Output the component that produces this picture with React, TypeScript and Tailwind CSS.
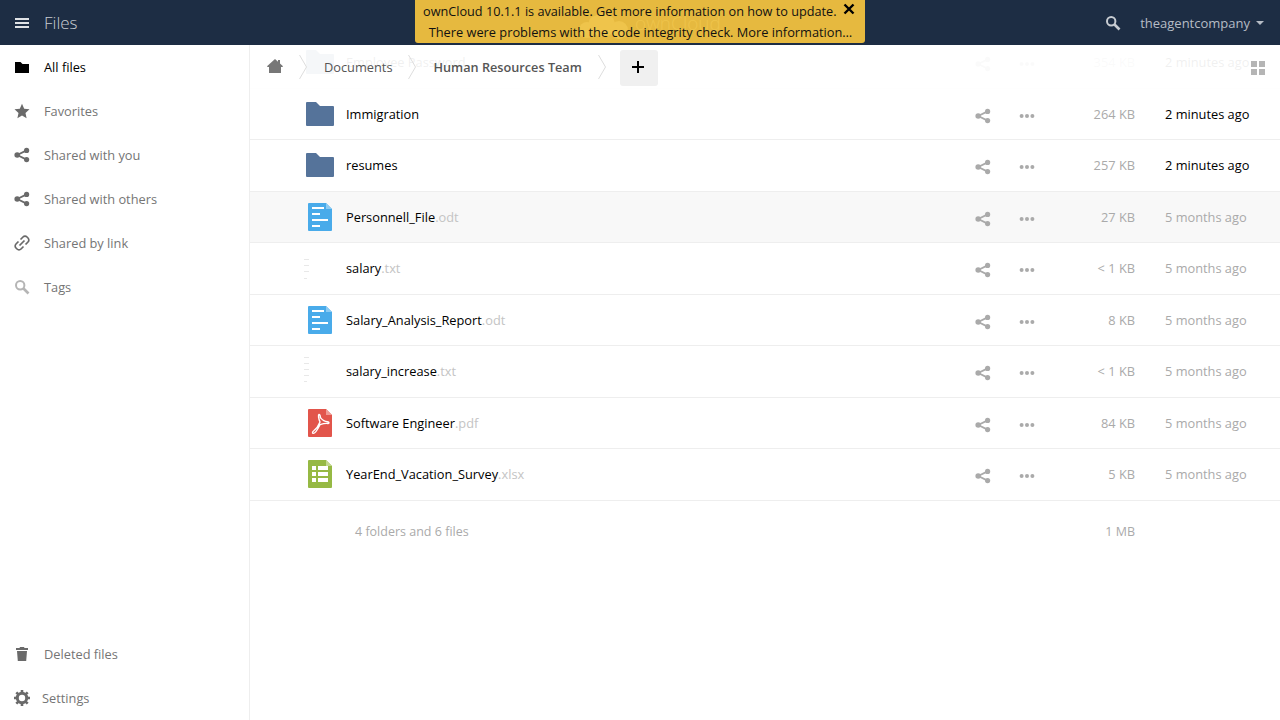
import React from "react";

const Share = ({ c = "#aaa", s = 16 }: { c?: string; s?: number }) => (
  <svg width={s} height={s} viewBox="0 0 16 16" fill={c} className="shrink-0">
    <circle cx="12.6" cy="3.4" r="2.6" />
    <circle cx="12.6" cy="12.6" r="2.6" />
    <circle cx="3.2" cy="8" r="2.8" />
    <path d="M3.2 8 12.6 3.4M3.2 8l9.4 4.6" stroke={c} strokeWidth="1.8" fill="none" />
  </svg>
);

const Dots = () => (
  <svg width="16" height="16" viewBox="0 0 16 16" fill="#aaa" className="shrink-0">
    <circle cx="2.6" cy="8" r="2" />
    <circle cx="8" cy="8" r="2" />
    <circle cx="13.4" cy="8" r="2" />
  </svg>
);

const Folder = ({ c = "#55739a" }: { c?: string }) => (
  <svg width="28" height="24" viewBox="0 0 28 24" className="shrink-0">
    <path d="M0 1a1 1 0 0 1 1-1h9l4 4h13a1 1 0 0 1 1 1v18a1 1 0 0 1-1 1H1a1 1 0 0 1-1-1z" fill={c} />
  </svg>
);

const Doc = () => (
  <svg width="24" height="28" viewBox="0 0 24 28" className="shrink-0">
    <path d="M1 0h17l6 6v21a1 1 0 0 1-1 1H1a1 1 0 0 1-1-1V1a1 1 0 0 1 1-1z" fill="#49abea" />
    <path d="M18 0l6 6h-6z" fill="#8ccbf3" />
    <path d="M4 4h12v2H4zM4 10h8v2H4zM4 16h16v2H4zM4 22h8v2H4z" fill="#fff" />
  </svg>
);

const Pdf = () => (
  <svg width="24" height="28" viewBox="0 0 24 28" className="shrink-0">
    <path d="M1 0h17l6 6v21a1 1 0 0 1-1 1H1a1 1 0 0 1-1-1V1a1 1 0 0 1 1-1z" fill="#e2554b" />
    <path d="M18 0l6 6h-6z" fill="#ee9b94" />
    <path
      d="M11 5.500c-1 .4-.5 4 1 7.500-1.500 3.700-4 7-6 8.500-1.400 1-2 2.400-1 2.800 1.600.5 4.500-3.600 7-8.600 3-1 6-1.500 8-1.200 1.300.2 1.400-1.800-.5-1.800-2.500 0-5.500-2-7-4C12.500 10 12.300 5 11 5.500z"
      fill="none"
      stroke="#fff"
      strokeWidth="1.400"
    />
  </svg>
);

const Sheet = () => (
  <svg width="24" height="28" viewBox="0 0 24 28" className="shrink-0">
    <path d="M1 0h17l6 6v21a1 1 0 0 1-1 1H1a1 1 0 0 1-1-1V1a1 1 0 0 1 1-1z" fill="#96b944" />
    <path d="M18 0l6 6h-6z" fill="#c3d78f" />
    <path d="M4 6h4v4H4zM10 6h10v4H10zM4 12h4v4H4zM10 12h10v4H10zM4 18h4v4H4zM10 18h10v4H10z" fill="#fff" />
  </svg>
);

const Faint = ({ long }: { long?: boolean }) => (
  <svg width="28" height="28" viewBox="0 0 28 28" className="shrink-0 overflow-visible">
    <path
      d={long ? "M-2 0.500h5M-2 6.500h5M-2 12.500h5M-2 18.500h5M-2 24.500h3" : "M-2 5.500h5M-2 11.500h5M-2 17.500h5M-2 24.500h3"}
      stroke="#e8e8e8"
      strokeWidth="1"
    />
  </svg>
);

type Row = {
  name: string;
  ext?: string;
  icon: React.ReactNode;
  size: string;
  date: string;
  recent?: boolean;
  selected?: boolean;
};

const rows: Row[] = [
  { name: "Employee Password", icon: <Folder />, size: "354 KB", date: "2 minutes ago", recent: true },
  { name: "Immigration", icon: <Folder />, size: "264 KB", date: "2 minutes ago", recent: true },
  { name: "resumes", icon: <Folder />, size: "257 KB", date: "2 minutes ago", recent: true },
  { name: "Personnell_File", ext: ".odt", icon: <Doc />, size: "27 KB", date: "5 months ago", selected: true },
  { name: "salary", ext: ".txt", icon: <Faint />, size: "< 1 KB", date: "5 months ago" },
  { name: "Salary_Analysis_Report", ext: ".odt", icon: <Doc />, size: "8 KB", date: "5 months ago" },
  { name: "salary_increase", ext: ".txt", icon: <Faint long />, size: "< 1 KB", date: "5 months ago" },
  { name: "Software Engineer", ext: ".pdf", icon: <Pdf />, size: "84 KB", date: "5 months ago" },
  { name: "YearEnd_Vacation_Survey", ext: ".xlsx", icon: <Sheet />, size: "5 KB", date: "5 months ago" },
];

const FileRow = ({ r }: { r: Row }) => (
  <div className={`flex h-[51.5px] items-center border-b border-[#eeeeee] pl-[56px] ${r.selected ? "bg-[#f8f8f8]" : ""}`}>
    <div className="flex w-[28px] justify-center">{r.icon}</div>
    <div className="ml-[12px] mt-[1.5px] flex-1 text-[12.8px] text-black">
      {r.name}
      {r.ext && <span className="text-[#c4c4c4]">{r.ext}</span>}
    </div>
    <div className="mt-[4px] flex w-[16px] justify-center">
      <Share />
    </div>
    <div className="ml-[28px] mt-[4px] flex w-[16px] justify-center">
      <Dots />
    </div>
    <div className="mt-[1px] w-[100px] text-right text-[12.8px] text-[#aaaaaa]">{r.size}</div>
    <div className={`ml-[30px] mt-[1px] w-[115px] text-[12.8px] ${r.recent ? "text-black" : "text-[#aaaaaa]"}`}>{r.date}</div>
  </div>
);

const NavIcon = ({ d, c = "#6a6a6a" }: { d: string; c?: string }) => (
  <svg width="16" height="16" viewBox="0 0 16 16" fill={c} className="shrink-0">
    <path d={d} />
  </svg>
);

const Search = ({ c, sw = 2 }: { c: string; sw?: number }) => (
  <svg width="16" height="16" viewBox="0 0 16 16" fill="none" stroke={c} className="shrink-0">
    <circle cx="6.200" cy="6.200" r="4.200" strokeWidth={sw} />
    <path d="M9.500 9.500l5 5" strokeWidth={sw + 0.6} />
  </svg>
);

const Link = () => (
  <svg width="16" height="16" viewBox="0 0 16 16" fill="none" stroke="#6a6a6a" strokeWidth="1.700" className="shrink-0">
    <path d="M6.500 4.500l2.500-2.500a2.800 2.800 0 0 1 4 0l1 1a2.800 2.800 0 0 1 0 4l-2.500 2.500" />
    <path d="M9.500 11.500l-2.500 2.500a2.800 2.800 0 0 1-4 0l-1-1a2.800 2.800 0 0 1 0-4l2.500-2.500" />
    <path d="M5.500 10.500l5-5" />
  </svg>
);

const Gear = () => (
  <svg width="16" height="16" viewBox="0 0 16 16" fill="none" className="shrink-0">
    <circle cx="8" cy="8" r="4.700" stroke="#6a6a6a" strokeWidth="3" />
    <path
      d="M8 0v3M8 13v3M0 8h3M13 8h3M2.300 2.300l2.100 2.100M11.600 11.600l2.100 2.100M2.300 13.700l2.100-2.100M11.600 4.400l2.100-2.100"
      stroke="#6a6a6a"
      strokeWidth="2.600"
    />
  </svg>
);

const NavItem = ({ icon, label, active }: { icon: React.ReactNode; label: string; active?: boolean }) => (
  <div className="flex h-[44px] items-center pl-[14px]">
    {icon}
    <span className={`ml-[14px] mt-[1px] text-[12.8px] ${active ? "text-black" : "text-[#757575]"}`}>{label}</span>
  </div>
);

const Chevron = () => (
  <svg width="8" height="24" viewBox="0 0 8 24" fill="none" stroke="#dddddd" className="shrink-0">
    <path d="M0.500 0l7 12-7 12" />
  </svg>
);

export default function App() {
  return (
    <div className="relative flex h-[720px] w-[1280px] flex-col overflow-hidden bg-white font-['Open_Sans',sans-serif]">
      <header className="flex h-[45px] shrink-0 items-center bg-[#1d2d44]">
        <svg width="16" height="16" viewBox="0 0 16 16" fill="#dfe2e6" className="ml-[14px]">
          <path d="M1 3h14v2H1zM1 7h14v2H1zM1 11h14v2H1z" />
        </svg>
        <span className="ml-[14px] text-[17px] font-light text-[#c8ccd2]">Files</span>
        <div className="ml-auto flex items-center pr-[16px]">
          <Search c="#c8ccd2" />
          <span className="ml-[19px] mt-[2px] text-[13px] text-[#b6bcc5]">theagentcompany</span>
          <svg width="8" height="4" viewBox="0 0 8 4" fill="#b6bcc5" className="ml-[6px] mt-[1px]">
            <path d="M0 0h8L4 4z" />
          </svg>
        </div>
      </header>

      <div className="flex min-h-0 flex-1">
        <aside className="flex w-[250px] shrink-0 flex-col border-r border-[#eeeeee]">
          <NavItem active label="All files" icon={<NavIcon c="#000" d="M1 3h5.500l2 2H15v9H1z" />} />
          <NavItem
            label="Favorites"
            icon={<NavIcon d="M8 .8l2.200 4.900 5.300.6-4 3.600 1.100 5.300L8 12.500 3.400 15.200l1.100-5.300-4-3.600 5.300-.6z" />}
          />
          <NavItem label="Shared with you" icon={<Share c="#6a6a6a" />} />
          <NavItem label="Shared with others" icon={<Share c="#6a6a6a" />} />
          <NavItem label="Shared by link" icon={<Link />} />
          <NavItem label="Tags" icon={<Search c="#b5b5b5" />} />
          <div className="mt-auto">
            <NavItem
              label="Deleted files"
              icon={<NavIcon d="M6 1h4l.500 1H14v2H2V2h3.500zM3 5h10l-.800 10H3.800z" />}
            />
            <div className="flex h-[44px] items-center pl-[14px]">
              <Gear />
              <span className="ml-[12px] mt-[1px] text-[12.8px] text-[#757575]">Settings</span>
            </div>
          </div>
        </aside>

        <main className="relative min-w-0 flex-1 overflow-hidden">
          <div className="mt-[-8px]">
            {rows.map((r) => (
              <FileRow key={r.name} r={r} />
            ))}
            <div className="flex h-[62px] items-center pl-[105px] text-[12.5px] text-[#aaaaaa]">
              <span className="mt-[2px] flex-1">4 folders and 6 files</span>
              <span className="mr-[145px] mt-[2px]">1 MB</span>
            </div>
          </div>

          <div className="absolute inset-x-0 top-0 flex h-[44px] items-center bg-white/[0.94]">
            <div className="mb-[2px] flex w-[49px] justify-center">
              <NavIcon c="#777777" d="M8 1l3 2.700V2h2v3.500L16 8.300l-.600.700H14v6H2V9H.600L0 8.300z" />
            </div>
            <Chevron />
            <span className="ml-[17px] mt-[2px] text-[12.8px] text-[#555555]">Documents</span>
            <div className="ml-[15px]">
              <Chevron />
            </div>
            <span className="ml-[18px] mt-[2px] text-[12.7px] font-semibold text-[#555555]">Human Resources Team</span>
            <div className="ml-[16px]">
              <Chevron />
            </div>
            <button className="ml-[14px] mt-[2px] flex h-[36px] w-[38px] items-center justify-center rounded-[3px] bg-[#f0f0f0]">
              <svg width="14" height="14" viewBox="0 0 14 14" fill="#000" className="mt-[-2px] ml-[-1px]">
                <path d="M6 1h2v5h5v2H8v5H6V8H1V6h5z" />
              </svg>
            </button>
            <svg width="14" height="14" viewBox="0 0 14 14" fill="#b5b5b5" className="ml-auto mr-[15px] mt-[2px]">
              <path d="M0 0h6v6H0zM8 0h6v6H8zM0 8h6v6H0zM8 8h6v6H8z" />
            </svg>
          </div>
        </main>
      </div>

      <div className="absolute left-[415px] top-0 h-[43px] w-[450px] overflow-hidden rounded-b-[3px] bg-[#e6b93f] text-center text-[12.7px] text-[#111]">
        <div className="absolute left-[158px] top-[13px] flex items-center">
          <svg width="60" height="26" viewBox="0 0 60 26" fill="#efc44b">
            <circle cx="30" cy="12" r="12" />
            <circle cx="14" cy="17" r="8" />
            <circle cx="46" cy="17" r="9" />
            <circle cx="22" cy="9" r="6" />
          </svg>
          <span className="ml-[2px] mt-[-6px] text-[19px] font-light leading-none text-[#efc44b]">ownCloud</span>
        </div>
        <div className="relative flex h-[23px] items-center justify-start pl-[8px]">
          ownCloud 10.1.1 is available. Get more information on how to update.
        </div>
        <div className="relative flex h-[20px] items-center justify-center pl-[1px] text-[12.8px]">
          There were problems with the code integrity check. More information…
        </div>
        <svg width="12" height="12" viewBox="0 0 12 12" stroke="#000" strokeWidth="2.400" className="absolute left-[428px] top-[3px]">
          <path d="M1.500 1.500l9 9M10.500 1.500l-9 9" />
        </svg>
      </div>
    </div>
  );
}
